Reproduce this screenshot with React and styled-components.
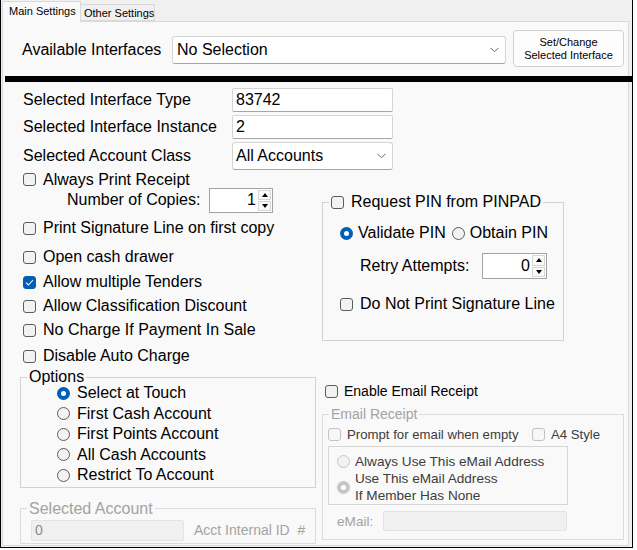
import React from 'react';
import styled, { createGlobalStyle } from 'styled-components';

const Global = createGlobalStyle`
  html, body { margin: 0; padding: 0; background: #ffffff; }
  body { font-family: "Liberation Sans", Arial, sans-serif; color: #000; }
  * { box-sizing: border-box; }
`;

const Window = styled.div`
  width: 633px;
  height: 548px;
  border: 1px solid #000;
  border-top: none;
  background: #f0f0f0;
  display: flex;
  flex-direction: column;
  padding: 0 3px 1px 1px;
`;

const TabStrip = styled.div`
  height: 21px;
  display: flex;
  align-items: flex-end;
  flex: none;
`;

const Tab = styled.div`
  position: relative;
  z-index: 1;
  height: ${p => (p.$active ? 21 : 17)}px;
  width: ${p => p.$w}px;
  margin-bottom: ${p => (p.$active ? -1 : 0)}px;
  background: ${p => (p.$active ? '#f9f9f9' : '#f0f0f0')};
  border: 1px solid #d9d9d9;
  border-bottom: ${p => (p.$active ? 'none' : '1px solid #d9d9d9')};
  border-left: ${p => (p.$active ? '1px solid #d9d9d9' : 'none')};
  padding-left: ${p => (p.$active ? 6 : 3)}px;
  font-size: 11px;
  line-height: ${p => (p.$active ? 19 : 16)}px;
  white-space: nowrap;
`;

const Page = styled.div`
  flex: 1;
  border: 1px solid #d9d9d9;
  background: #f9f9f9;
  display: flex;
  flex-direction: column;
`;

const TopRow = styled.div`
  display: flex;
  align-items: center;
  margin-top: 10px;
  padding-left: 19px;
  height: 36px;
`;

const TopLabel = styled.div`
  width: 150px;
  font-size: 16px;
`;

const Combo = styled.div`
  width: ${p => p.$w}px;
  height: ${p => p.$h}px;
  background: #fff;
  border: 1px solid #d4d4d4;
  border-bottom-color: #a6a6a6;
  border-radius: 3px;
  display: flex;
  align-items: center;
  padding: 0 6px 0 ${p => p.$pl}px;
  font-size: 16px;
  flex: none;
`;

const ComboText = styled.span`
  flex: 1;
  white-space: nowrap;
`;

const Chevron = () => (
  <svg width="9" height="6" viewBox="0 0 9 6">
    <polyline points="0.5,0.8 4.5,4.8 8.5,0.8" fill="none" stroke="#666" strokeWidth="1" />
  </svg>
);

const Button = styled.div`
  margin-left: 7px;
  margin-top: -3px;
  width: 111px;
  height: 37px;
  background: #fdfdfd;
  border: 1px solid #d0d0d0;
  border-radius: 4px;
  display: flex;
  align-items: center;
  justify-content: center;
  text-align: center;
  font-size: 11px;
  line-height: 13px;
`;

const Divider = styled.div`
  height: 6px;
  background: #000;
  margin: 8px -4px 0 2px;
  flex: none;
`;

const Body = styled.div`
  display: flex;
  padding: 4px 0 0 17px;
  gap: 6px;
`;

const Column = styled.div`
  width: ${p => p.$w}px;
  display: flex;
  flex-direction: column;
  flex: none;
`;

const Row = styled.div`
  height: ${p => p.$h}px;
  display: flex;
  align-items: center;
  padding-left: ${p => p.$pl || 0}px;
  margin-top: ${p => p.$mt || 0}px;
  gap: ${p => p.$gap || 0}px;
  font-size: ${p => p.$fs || 16}px;
  color: ${p => p.$color || '#000'};
  white-space: nowrap;
  flex: none;
`;

const FieldLabel = styled.span`
  width: ${p => p.$w}px;
  flex: none;
`;

const TextBox = styled.div`
  width: ${p => p.$w}px;
  height: ${p => p.$h}px;
  background: ${p => (p.$disabled ? '#f0f0f0' : '#fff')};
  border: 1px solid ${p => (p.$disabled ? '#e3e3e3' : '#d4d4d4')};
  border-bottom-color: ${p => (p.$disabled ? '#e3e3e3' : '#a6a6a6')};
  border-radius: 2px;
  display: flex;
  align-items: center;
  padding-left: 3px;
  font-size: ${p => p.$fs || 16}px;
  color: ${p => (p.$disabled ? '#8c8c8c' : '#000')};
  flex: none;
`;

const CheckBox = styled.span`
  width: 13px;
  height: 13px;
  flex: none;
  border-radius: 3px;
  border: 1px solid ${p => (p.$on ? '#005fb8' : p.$disabled ? '#c2c2c2' : '#5c5c5c')};
  background: ${p => (p.$on ? '#005fb8' : p.$disabled ? '#f7f7f7' : '#f2f2f2')};
  display: inline-flex;
  align-items: center;
  justify-content: center;
`;

const Check = ({ on, disabled }) => (
  <CheckBox $on={on} $disabled={disabled}>
    {on && (
      <svg width="9" height="7" viewBox="0 0 9 7">
        <polyline points="1,3.6 3.4,6 8,1" fill="none" stroke="#fff" strokeWidth="1.1" />
      </svg>
    )}
  </CheckBox>
);

const Radio = styled.span`
  width: 13px;
  height: 13px;
  flex: none;
  border-radius: 50%;
  display: inline-flex;
  align-items: center;
  justify-content: center;
  background: ${p => (p.$on ? (p.$disabled ? '#c6c6c6' : '#005fb8') : '#f2f2f2')};
  border: ${p => (p.$on ? 'none' : `1px solid ${p.$disabled ? '#c6c6c6' : '#5c5c5c'}`)};
  &::after {
    content: '';
    display: ${p => (p.$on ? 'block' : 'none')};
    width: 5px;
    height: 5px;
    border-radius: 50%;
    background: #fff;
  }
`;

const Spin = styled.div`
  width: ${p => p.$w}px;
  height: ${p => p.$h}px;
  border: 1px solid #a3a3a3;
  background: #fff;
  display: flex;
  flex: none;
`;

const SpinValue = styled.div`
  flex: 1;
  text-align: right;
  padding-right: 2px;
  font-size: 16px;
  display: flex;
  align-items: center;
  justify-content: flex-end;
`;

const SpinButtons = styled.div`
  width: 14px;
  display: flex;
  flex-direction: column;
  padding: 1px 1px 1px 0;
  gap: 1px;
`;

const SpinArrow = styled.div`
  flex: 1;
  border: 1px solid #d6d6d6;
  background: #fafafa;
  display: flex;
  align-items: center;
  justify-content: center;
  &::after {
    content: '';
    width: 0;
    height: 0;
    border-left: 3px solid transparent;
    border-right: 3px solid transparent;
    ${p => (p.$up ? 'border-bottom: 4px solid #000;' : 'border-top: 4px solid #000;')}
  }
`;

const Spinner = ({ w, h, value }) => (
  <Spin $w={w} $h={h}>
    <SpinValue>{value}</SpinValue>
    <SpinButtons>
      <SpinArrow $up />
      <SpinArrow />
    </SpinButtons>
  </Spin>
);

const Group = styled.fieldset`
  margin: ${p => p.$mt || 0}px 0 0 0;
  padding: 0;
  min-width: 0;
  width: ${p => p.$w}px;
  border: 1px solid ${p => (p.$disabled ? '#dcdcdc' : '#d2d2d2')};
  flex: none;
`;

const Legend = styled.legend`
  margin-left: 6px;
  padding: 0 2px;
  line-height: ${p => p.$lh}px;
  height: ${p => p.$lh}px;
  font-size: ${p => p.$fs || 16}px;
  color: ${p => (p.$disabled ? '#a3a3a3' : '#000')};
  display: flex;
  align-items: center;
  gap: 7px;
  white-space: nowrap;
  overflow: visible;
`;

const GroupBody = styled.div`
  padding: ${p => p.$p};
  display: flex;
  flex-direction: column;
`;

const InnerBox = styled.div`
  width: 240px;
  margin-top: 2px;
  border: 1px solid #d6d6d6;
  padding: 4px 0 0 8px;
  display: flex;
  flex-direction: column;
`;

const TwoLine = styled.span`
  line-height: 16.5px;
  white-space: nowrap;
`;

const Item = styled.span`
  display: flex;
  align-items: center;
  gap: ${p => p.$gap}px;
  width: ${p => (p.$w ? `${p.$w}px` : 'auto')};
  margin-left: ${p => p.$ml || 0}px;
  flex: none;
`;

const CheckRow = ({ h, label, on, pl = 3, gap = 7, mt }) => (
  <Row $h={h} $pl={pl} $gap={gap} $mt={mt}>
    <Check on={on} />
    <span>{label}</span>
  </Row>
);

const OptionRow = ({ label, on }) => (
  <Row $h={20.5} $pl={36} $gap={7}>
    <Radio $on={on} />
    <span>{label}</span>
  </Row>
);

export default function App() {
  return (
    <>
      <Global />
      <Window>
        <TabStrip>
          <Tab $active $w={79}>Main Settings</Tab>
          <Tab $w={74}>Other Settings</Tab>
        </TabStrip>
        <Page>
          <TopRow>
            <TopLabel>Available Interfaces</TopLabel>
            <Combo $w={334} $h={28} $pl={4}>
              <ComboText>No Selection</ComboText>
              <Chevron />
            </Combo>
            <Button>
              Set/Change
              <br />
              Selected Interface
            </Button>
          </TopRow>
          <Divider />
          <Body>
            <Column $w={296}>
              <Row $h={27} $pl={3}>
                <FieldLabel $w={209}>Selected Interface Type</FieldLabel>
                <TextBox $w={161} $h={24}>83742</TextBox>
              </Row>
              <Row $h={27} $pl={3}>
                <FieldLabel $w={209}>Selected Interface Instance</FieldLabel>
                <TextBox $w={161} $h={24}>2</TextBox>
              </Row>
              <Row $h={31} $pl={3}>
                <FieldLabel $w={209}>Selected Account Class</FieldLabel>
                <Combo $w={161} $h={28} $pl={3}>
                  <ComboText>All Accounts</ComboText>
                  <Chevron />
                </Combo>
              </Row>
              <CheckRow h={17} label="Always Print Receipt" />
              <Row $h={24} $pl={47}>
                <FieldLabel $w={142}>Number of Copies:</FieldLabel>
                <Spinner w={64} h={25} value="1" />
              </Row>
              <CheckRow h={32} label="Print Signature Line on first copy" />
              <CheckRow h={26} label="Open cash drawer" />
              <CheckRow h={24} label="Allow multiple Tenders" on />
              <CheckRow h={24} label="Allow Classification Discount" />
              <CheckRow h={24} label="No Charge If Payment In Sale" />
              <CheckRow h={28} label="Disable Auto Charge" />
              <Group $mt={1} $w={296}>
                <Legend $lh={12}>Options</Legend>
                <GroupBody $p="0 0 1px 0">
                  <OptionRow label="Select at Touch" on />
                  <OptionRow label="First Cash Account" />
                  <OptionRow label="First Points Account" />
                  <OptionRow label="All Cash Accounts" />
                  <OptionRow label="Restrict To Account" />
                </GroupBody>
              </Group>
              <Group $mt={15} $w={296} $disabled>
                <Legend $lh={12} $disabled>Selected Account</Legend>
                <GroupBody $p="5px 0 2px 10px">
                  <Row $h={21} $gap={10} $fs={14} $color="#a3a3a3">
                    <TextBox $w={153} $h={21} $disabled $fs={14}>0</TextBox>
                    <span>Acct Internal ID{'\u00a0'} #</span>
                  </Row>
                </GroupBody>
              </Group>
            </Column>
            <Column $w={302}>
              <Group $mt={108} $w={242}>
                <Legend $lh={16}>
                  <Check />
                  <span>Request PIN from PINPAD</span>
                </Legend>
                <GroupBody $p="12px 0 20px 17px">
                  <Row $h={22}>
                    <Item $gap={5}>
                      <Radio $on />
                      <span>Validate PIN</span>
                    </Item>
                    <Item $gap={5} $ml={6}>
                      <Radio />
                      <span>Obtain PIN</span>
                    </Item>
                  </Row>
                  <Row $h={44} $pl={20}>
                    <FieldLabel $w={122}>Retry Attempts:</FieldLabel>
                    <Spinner w={65} h={26} value="0" />
                  </Row>
                  <CheckRow h={32} pl={0} label="Do Not Print Signature Line" />
                </GroupBody>
              </Group>
              <Row $h={20} $mt={40} $pl={3} $gap={6} $fs={14}>
                <Check />
                <span>Enable Email Receipt</span>
              </Row>
              <Group $mt={7} $w={302} $disabled>
                <Legend $lh={12} $fs={14} $disabled>Email Receipt</Legend>
                <GroupBody $p="4px 0 8px 5px">
                  <Row $h={20} $fs={13.2} $color="#3c3c3c">
                    <Item $gap={6} $w={204}>
                      <Check disabled />
                      <span>Prompt for email when empty</span>
                    </Item>
                    <Item $gap={6}>
                      <Check disabled />
                      <span>A4 Style</span>
                    </Item>
                  </Row>
                  <InnerBox>
                    <Row $h={20} $gap={5} $fs={13.6} $color="#3c3c3c">
                      <Radio $disabled />
                      <span>Always Use This eMail Address</span>
                    </Row>
                    <Row $h={33} $gap={5} $fs={13.6} $color="#3c3c3c">
                      <Radio $on $disabled />
                      <TwoLine>
                        Use This eMail Address
                        <br />
                        If Member Has None
                      </TwoLine>
                    </Row>
                  </InnerBox>
                  <Row $h={20} $mt={6} $pl={9} $fs={13.6} $color="#a3a3a3">
                    <FieldLabel $w={46}>eMail:</FieldLabel>
                    <TextBox $w={184} $h={20} $disabled />
                  </Row>
                </GroupBody>
              </Group>
            </Column>
          </Body>
        </Page>
      </Window>
    </>
  );
}
